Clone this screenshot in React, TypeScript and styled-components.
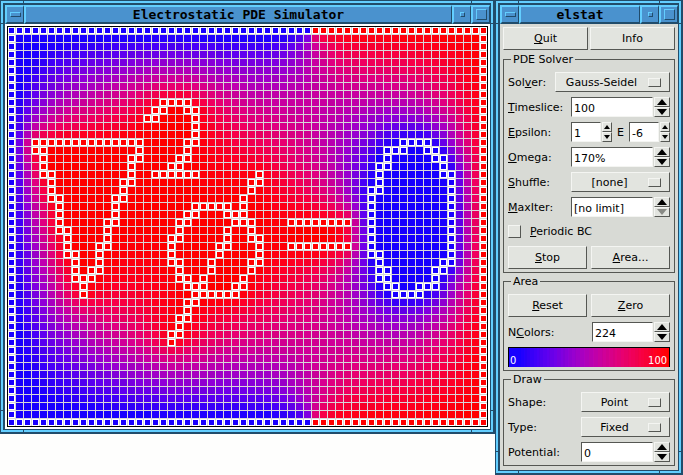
import React from "react";
import styled, { createGlobalStyle, css } from "styled-components";

const LIGHT = "#63ceff";
const MID = "#4a92ce";
const DARK = "#214c6b";
const FACE = "#d8dad5";
const RAISED = "#e2e4df";
const SHADE = "#555753";
const GLOSS = "#f4f5f2";

const GlobalStyle = createGlobalStyle`
  * { box-sizing: border-box; }
  body {
    margin: 0;
    background: #fefefd;
    color: #000;
    font: 11px/13px "DejaVu Sans", sans-serif;
  }
  button, input, select { font: inherit; color: inherit; margin: 0; border-radius: 0; outline: none; }
`;

/* ---------- field solver ---------- */

const COLS = 60;
const ROWS = 50;
const CELL = 8;

type Run = [row: number, from: number, to: number];

const live: Run[] = [
  [14, 3, 16], [15, 3, 4], [15, 16, 16], [16, 4, 4], [16, 15, 16], [17, 4, 4], [17, 15, 15],
  [18, 4, 5], [18, 15, 15], [19, 5, 5], [19, 14, 15], [20, 5, 5], [20, 14, 14],
  [21, 5, 6], [21, 13, 14], [22, 6, 6], [22, 13, 13], [23, 6, 6], [23, 13, 13],
  [24, 6, 6], [24, 12, 13], [25, 6, 7], [25, 12, 12], [26, 7, 7], [26, 12, 12],
  [27, 7, 7], [27, 11, 12], [28, 7, 8], [28, 11, 11], [29, 8, 8], [29, 11, 11],
  [30, 8, 8], [30, 10, 11], [31, 8, 10], [32, 9, 9], [33, 9, 9],
  [9, 19, 22], [10, 18, 19], [10, 22, 23], [11, 17, 18], [11, 23, 23], [12, 23, 23],
  [13, 23, 23], [14, 22, 23], [15, 22, 22], [16, 21, 22], [17, 20, 21], [18, 18, 23],
  [18, 31, 31], [19, 30, 31], [20, 30, 30], [21, 29, 29], [22, 23, 27], [22, 29, 29],
  [23, 22, 23], [23, 27, 29], [24, 21, 22], [24, 28, 30], [25, 21, 21], [25, 27, 27],
  [25, 30, 30], [26, 20, 21], [26, 27, 27], [26, 30, 31], [27, 20, 20], [27, 26, 27],
  [27, 31, 31], [28, 20, 20], [28, 26, 26], [28, 31, 31], [29, 20, 21], [29, 25, 25],
  [29, 30, 31], [30, 21, 21], [30, 25, 25], [30, 30, 30], [31, 21, 22], [31, 24, 24],
  [31, 29, 29], [32, 22, 24], [32, 28, 29], [33, 23, 28], [34, 22, 23], [35, 22, 22],
  [36, 21, 22], [37, 21, 21], [38, 20, 21], [39, 20, 20],
  [24, 35, 42], [27, 35, 42],
];

const grounded: Run[] = [
  [14, 49, 52], [15, 47, 49], [15, 52, 53], [16, 47, 47], [16, 53, 54], [17, 46, 47],
  [17, 54, 54], [18, 46, 46], [18, 54, 55], [19, 46, 46], [19, 55, 55], [20, 45, 46],
  [20, 55, 55],
  ...[21, 22, 23, 24, 25, 26, 27].flatMap((r): Run[] => [[r, 45, 45], [r, 55, 55]]),
  [28, 45, 46], [28, 55, 55], [29, 46, 46], [29, 54, 55], [30, 46, 47], [30, 53, 54],
  [31, 46, 47], [31, 53, 53], [32, 47, 48], [32, 51, 53], [33, 48, 51],
];

function solve() {
  const v = new Float64Array(COLS * ROWS);
  const fixed = new Uint8Array(COLS * ROWS);
  const pin = (r: number, c: number, value: number) => {
    v[r * COLS + c] = value;
    fixed[r * COLS + c] = 1;
  };
  for (let c = 0; c < COLS; c++) {
    pin(0, c, c < 38 ? 0 : 100);
    pin(ROWS - 1, c, c < 38 ? 0 : 100);
  }
  for (let r = 0; r < ROWS; r++) {
    pin(r, 0, 0);
    pin(r, COLS - 1, 100);
  }
  live.forEach(([r, a, b]) => { for (let c = a; c <= b; c++) pin(r, c, 100); });
  grounded.forEach(([r, a, b]) => { for (let c = a; c <= b; c++) pin(r, c, 0); });
  for (let n = 0; n < 500; n++) {
    for (let r = 1; r < ROWS - 1; r++) {
      for (let c = 1; c < COLS - 1; c++) {
        const i = r * COLS + c;
        if (fixed[i]) continue;
        const mean = (v[i - 1] + v[i + 1] + v[i - COLS] + v[i + COLS]) / 4;
        v[i] += 1.7 * (mean - v[i]);
      }
    }
  }
  return { v, fixed };
}

function heat(percent: number) {
  const a = (Math.min(100, Math.max(0, percent)) / 100) * (Math.PI / 2);
  const red = Math.max(24, Math.round((Math.sin(a) * 255) / 8) * 8);
  const blue = Math.round((Math.cos(a) * 255) / 8) * 8;
  return `rgb(${Math.min(255, red)},0,${Math.min(255, blue)})`;
}

const field = solve();

const FieldSvg = styled.svg`
  display: block;
  width: 100%;
  height: auto;
  border: 1px solid #000;
  background: #d8d8d8;
`;

function Field() {
  const cells: React.ReactNode[] = [];
  for (let r = 0; r < ROWS; r++) {
    for (let c = 0; c < COLS; c++) {
      const i = r * COLS + c;
      const x = c * CELL;
      const y = r * CELL;
      if (field.fixed[i]) {
        cells.push(<rect key={`b${i}`} x={x} y={y} width={7} height={7} fill="#fff" />);
        cells.push(<rect key={i} x={x + 1} y={y + 1} width={5} height={5} fill={heat(field.v[i])} />);
      } else {
        cells.push(<rect key={i} x={x} y={y} width={7} height={7} fill={heat(field.v[i])} />);
      }
    }
  }
  return (
    <FieldSvg viewBox="0 0 479 399" shapeRendering="crispEdges" role="img" aria-label="Potential field">
      {cells}
    </FieldSvg>
  );
}

/* ---------- window frame ---------- */

const raisedBlue = css`
  border: solid;
  border-width: 1px;
  border-color: ${LIGHT} ${DARK} ${DARK} ${LIGHT};
`;

const Desktop = styled.main`
  display: flex;
  align-items: flex-start;
`;

const Frame = styled.section<{ $basis?: number }>`
  position: relative;
  flex: ${(p) => (p.$basis ? `0 0 ${p.$basis}px` : "1 1 0")};
  min-width: 0;
  padding: 1px 2px 2px 1px;
  background: ${DARK};
`;

const Rim = styled.div`
  border: 2px solid ${LIGHT};
  padding: 2px 1px 1px 2px;
  background: ${DARK};
`;

const Notch = styled.i<{ $side: "top" | "bottom" | "left" | "right"; $end?: boolean }>`
  position: absolute;
  background: ${DARK};
  ${(p) =>
    p.$side === "top" || p.$side === "bottom"
      ? css`width: 1px; height: 3px; ${p.$side}: 1px; ${p.$end ? "right" : "left"}: 23px;`
      : css`width: 3px; height: 1px; ${p.$side}: 1px; ${p.$end ? "bottom" : "top"}: 23px;`}
`;

const TitleBar = styled.header`
  display: flex;
  height: 19px;
`;

const titlePart = css`
  border: 0 solid;
  border-width: 2px 1px 2px 2px;
  border-color: ${LIGHT} ${DARK} ${DARK} ${LIGHT};
  background: ${MID};
`;

const TitleButton = styled.button`
  ${titlePart}
  width: 19px;
  padding: 0;
  display: flex;
  align-items: center;
  justify-content: center;
`;

const Title = styled.h1`
  ${titlePart}
  flex: 1;
  margin: 0;
  font: bold 13px/15px "DejaVu Sans Mono", monospace;
  text-align: center;
  white-space: nowrap;
  overflow: hidden;
`;

const Knob = styled.span<{ $w: number; $h: number }>`
  ${raisedBlue}
  width: ${(p) => p.$w}px;
  height: ${(p) => p.$h}px;
`;

function AppWindow(props: { title: string; basis?: number; children: React.ReactNode }) {
  return (
    <Frame $basis={props.basis}>
      <Rim>
        <TitleBar>
          <TitleButton aria-label="Window menu"><Knob $w={11} $h={5} /></TitleButton>
          <Title>{props.title}</Title>
          <TitleButton aria-label="Minimize"><Knob $w={5} $h={5} /></TitleButton>
          <TitleButton aria-label="Maximize"><Knob $w={11} $h={11} /></TitleButton>
        </TitleBar>
        {props.children}
      </Rim>
      {(["top", "bottom", "left", "right"] as const).map((side) => (
        <React.Fragment key={side}>
          <Notch $side={side} />
          <Notch $side={side} $end />
        </React.Fragment>
      ))}
    </Frame>
  );
}

const CanvasArea = styled.div`
  padding: 2px;
  background: #fff;
`;

/* ---------- control panel ---------- */

const Panel = styled.form`
  display: flex;
  flex-direction: column;
  gap: 2px;
  padding: 3px 3px 4px;
  background: ${FACE};
`;

const raised = css`
  border: 1px solid;
  border-color: ${GLOSS} ${SHADE} ${SHADE} ${GLOSS};
  background: ${RAISED};
`;

const ButtonRow = styled.div<{ $gap: number }>`
  display: flex;
  gap: ${(p) => p.$gap}px;
`;

const TopRow = styled(ButtonRow)`
  padding-bottom: 1px;
`;

const PushButton = styled.button`
  ${raised}
  flex: 1 1 0;
  height: 23px;
  padding: 0;
`;

const Group = styled.fieldset`
  display: flex;
  flex-direction: column;
  gap: 5px;
  min-width: 0;
  margin: 0;
  border: 1px solid ${SHADE};
  padding: 6px 4px 3px;
`;

const Legend = styled.legend`
  padding: 0 2px;
  margin-left: 3px;
`;

const Row = styled.div`
  display: flex;
  align-items: center;
  height: 20px;
`;

const Label = styled.label`
  flex: 1;
  white-space: nowrap;
`;

const SelectBox = styled.span<{ $w: number }>`
  position: relative;
  width: ${(p) => p.$w}px;
  height: 20px;
  &::after {
    content: "";
    position: absolute;
    right: 9px;
    top: 6px;
    width: 11px;
    height: 7px;
    ${raised}
    pointer-events: none;
  }
`;

const NativeSelect = styled.select`
  ${raised}
  appearance: none;
  width: 100%;
  height: 100%;
  padding: 0 22px 0 0;
  text-align: center;
  text-align-last: center;
`;

const SpinBox = styled.span<{ $w: number }>`
  display: flex;
  gap: 1px;
  width: ${(p) => p.$w}px;
  height: 20px;
`;

const TextInput = styled.input`
  flex: 1;
  min-width: 0;
  border: 1px solid;
  border-color: ${SHADE} ${GLOSS} ${GLOSS} ${SHADE};
  padding: 2px 0 0 2px;
  background: #fff;
`;

const Arrows = styled.span<{ $small?: boolean }>`
  display: flex;
  flex-direction: column;
  width: ${(p) => (p.$small ? 10 : 16)}px;
`;

const ArrowButton = styled.button`
  ${raised}
  flex: 1;
  min-height: 0;
  padding: 0;
  display: flex;
  align-items: center;
  justify-content: center;
  color: #000;
  &:disabled { color: #888a85; }
`;

function Arrow({ down, small }: { down?: boolean; small?: boolean }) {
  const w = small ? 6 : 10;
  const h = small ? 4 : 6;
  const d = down ? `M0 0H${w}L${w / 2} ${h}Z` : `M0 ${h}H${w}L${w / 2} 0Z`;
  return <svg width={w} height={h} viewBox={`0 0 ${w} ${h}`}><path d={d} fill="currentColor" /></svg>;
}

function Spin(props: { id: string; value: string; w: number; small?: boolean; floor?: boolean }) {
  return (
    <SpinBox $w={props.w}>
      <TextInput id={props.id} defaultValue={props.value} />
      <Arrows $small={props.small}>
        <ArrowButton type="button" aria-label="Increase"><Arrow small={props.small} /></ArrowButton>
        <ArrowButton type="button" aria-label="Decrease" disabled={props.floor}>
          <Arrow down small={props.small} />
        </ArrowButton>
      </Arrows>
    </SpinBox>
  );
}

function Choice(props: { id: string; value: string; w: number }) {
  return (
    <SelectBox $w={props.w}>
      <NativeSelect id={props.id} defaultValue={props.value}>
        <option>{props.value}</option>
      </NativeSelect>
    </SelectBox>
  );
}

const Exponent = styled.label`
  flex: 0 0 17px;
  padding-left: 5px;
`;

const CheckRow = styled.label`
  display: flex;
  align-items: center;
  gap: 9px;
  height: 19px;
`;

const Check = styled.input`
  ${raised}
  appearance: none;
  width: 13px;
  height: 13px;
`;

const Scale = styled.div`
  position: relative;
  display: flex;
  justify-content: space-between;
  align-items: flex-end;
  height: 20px;
  padding: 0 2px 0 1px;
  border: solid #000;
  border-width: 1px 1px 0;
  color: #fff;
  font: 11px/13px "DejaVu Sans Condensed", "DejaVu Sans", sans-serif;
`;

const ScaleSvg = styled.svg`
  position: absolute;
  inset: 0;
  width: 100%;
  height: 100%;
`;

const ScaleText = styled.span`
  position: relative;
`;

function ColorScale() {
  return (
    <Scale>
      <ScaleSvg viewBox="0 0 160 1" preserveAspectRatio="none" shapeRendering="crispEdges" aria-hidden="true">
        {Array.from({ length: 160 }, (_, i) => (
          <rect key={i} x={i} y={0} width={1} height={1} fill={heat((i / 159) * 100)} />
        ))}
      </ScaleSvg>
      <ScaleText>0</ScaleText>
      <ScaleText>100</ScaleText>
    </Scale>
  );
}

export default function App() {
  return (
    <>
      <GlobalStyle />
      <Desktop>
        <AppWindow title="Electrostatic PDE Simulator">
          <CanvasArea><Field /></CanvasArea>
        </AppWindow>
        <AppWindow title="elstat" basis={188}>
          <Panel onSubmit={(e) => e.preventDefault()}>
            <TopRow $gap={2}>
              <PushButton type="button"><u>Q</u>uit</PushButton>
              <PushButton type="button">Info</PushButton>
            </TopRow>
            <Group>
              <Legend>PDE Solver</Legend>
              <Row><Label htmlFor="solver">Sol<u>v</u>er:</Label><Choice id="solver" value="Gauss-Seidel" w={115} /></Row>
              <Row><Label htmlFor="timeslice"><u>T</u>imeslice:</Label><Spin id="timeslice" value="100" w={99} /></Row>
              <Row>
                <Label htmlFor="mantissa"><u>E</u>psilon:</Label>
                <Spin id="mantissa" value="1" w={41} small />
                <Exponent htmlFor="exponent">E</Exponent>
                <Spin id="exponent" value="-6" w={41} small />
              </Row>
              <Row><Label htmlFor="omega"><u>O</u>mega:</Label><Spin id="omega" value="170%" w={99} /></Row>
              <Row><Label htmlFor="shuffle"><u>S</u>huffle:</Label><Choice id="shuffle" value="[none]" w={99} /></Row>
              <Row><Label htmlFor="maxiter"><u>M</u>axIter:</Label><Spin id="maxiter" value="[no limit]" w={99} floor /></Row>
              <CheckRow><Check type="checkbox" /><span><u>P</u>eriodic BC</span></CheckRow>
              <ButtonRow $gap={4}>
                <PushButton type="button"><u>S</u>top</PushButton>
                <PushButton type="button"><u>A</u>rea...</PushButton>
              </ButtonRow>
            </Group>
            <Group>
              <Legend>Area</Legend>
              <ButtonRow $gap={4}>
                <PushButton type="button"><u>R</u>eset</PushButton>
                <PushButton type="button"><u>Z</u>ero</PushButton>
              </ButtonRow>
              <Row><Label htmlFor="ncolors">N<u>C</u>olors:</Label><Spin id="ncolors" value="224" w={78} /></Row>
              <ColorScale />
            </Group>
            <Group>
              <Legend>Draw</Legend>
              <Row><Label htmlFor="shape">Shape:</Label><Choice id="shape" value="Point" w={89} /></Row>
              <Row><Label htmlFor="type">Type:</Label><Choice id="type" value="Fixed" w={89} /></Row>
              <Row><Label htmlFor="potential">Potential:</Label><Spin id="potential" value="0" w={89} /></Row>
            </Group>
          </Panel>
        </AppWindow>
      </Desktop>
    </>
  );
}
